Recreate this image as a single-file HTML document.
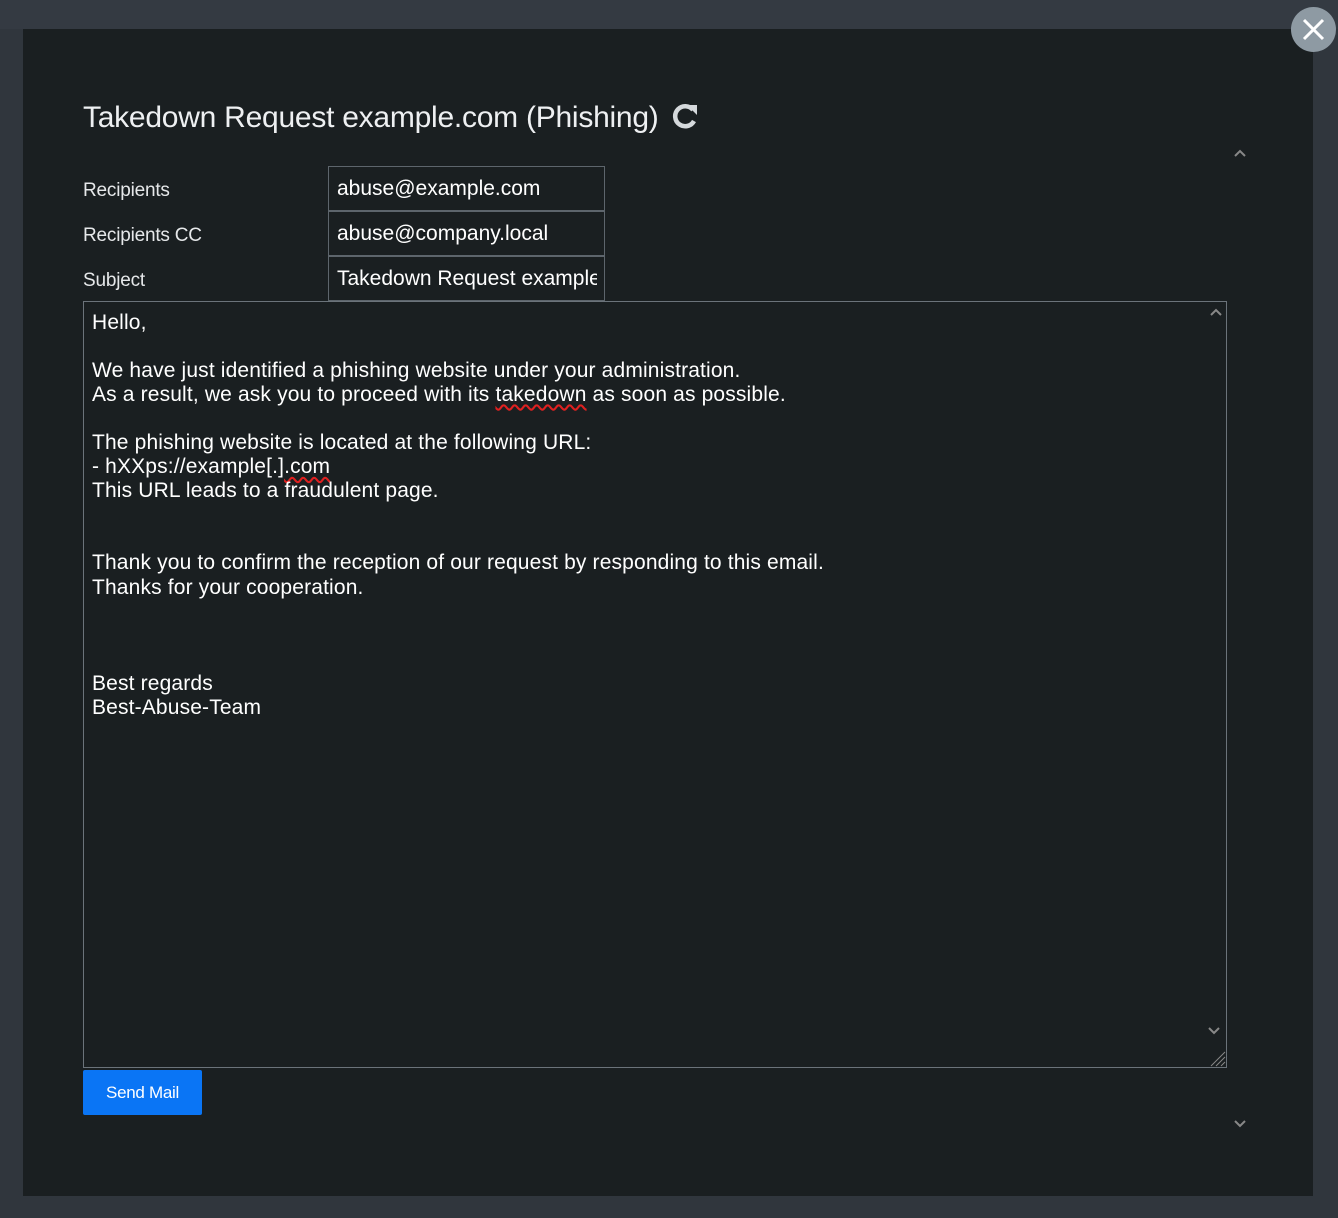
<!DOCTYPE html>
<html><head><meta charset="utf-8"><style>
*{box-sizing:border-box;margin:0;padding:0}
body{width:1338px;height:1218px;background:#30363d;font-family:"Liberation Sans",sans-serif;position:relative;overflow:hidden}
.bgtop{position:absolute;left:0;top:0;width:1338px;height:29px;background:#343a42}
.modal{position:absolute;left:23px;top:29px;width:1290px;height:1167px;background:#1a1f21}
.title{position:absolute;left:60px;top:72px;font-size:30px;color:#eef0f2;letter-spacing:-0.25px;white-space:nowrap}
.lbl{position:absolute;left:60px;font-size:19px;color:#e6e8ea;letter-spacing:-0.2px}
.inp{position:absolute;left:305px;width:277px;height:45px;border:1px solid #5d656c;color:#fff;font-size:21px;padding:10px 0 0 8px;overflow:hidden;white-space:nowrap}
.inp span{display:block;width:260px;overflow:hidden}
.ta{position:absolute;left:60px;top:272px;width:1144px;height:767px;border:1px solid #6b737a;color:#fff;font-size:21px;line-height:24.05px;padding:9px 8px;letter-spacing:0.15px}
.btn{position:absolute;left:60px;top:1041px;width:119px;height:45px;background:#0a75f5;border-radius:2px;color:#fff;font-size:17px;text-align:center;line-height:45px;letter-spacing:-0.3px}
.sq{text-decoration:underline wavy #e02020;text-underline-offset:3px}
.close{position:absolute;left:1291px;top:7px;width:45px;height:45px;border-radius:50%;background:#8e9aa3}
</style></head><body>
<div class="bgtop"></div>
<div class="modal">
<div class="title">Takedown Request example.com (Phishing) <svg width="28" height="28" viewBox="0 0 28 28" style="vertical-align:-3px;margin-left:4px"><path d="M22 8 A10 10 0 1 0 23 19" fill="none" stroke="#d5d9dc" stroke-width="4.5"/><path d="M16 3 L26 3 L26 13 Z" fill="#d5d9dc"/></svg></div>
<div class="lbl" style="top:151px">Recipients</div>
<div class="lbl" style="top:196px">Recipients CC</div>
<div class="lbl" style="top:241px">Subject</div>
<div class="inp" style="top:137px"><span>abuse@example.com</span></div>
<div class="inp" style="top:182px"><span>abuse@company.local</span></div>
<div class="inp" style="top:227px"><span>Takedown Request example.com (Phishing)</span></div>
<div class="ta">Hello,<br><br>We have just identified a phishing website under your administration.<br>As a result, we ask you to proceed with its <span class="sq">takedown</span> as soon as possible.<br><br>The phishing website is located at the following URL:<br>- hXXps://example[.]<span class="sq">.com</span><br>This URL leads to a fraudulent page.<br><br><br>Thank you to confirm the reception of our request by responding to this email.<br>Thanks for your cooperation.<br><br><br><br>Best regards<br>Best-Abuse-Team
<svg style="position:absolute;right:2px;top:4px" width="16" height="12"><path d="M3 9 L8 4 L13 9" stroke="#888" stroke-width="2" fill="none"/></svg>
<svg style="position:absolute;right:4px;bottom:30px" width="16" height="12"><path d="M3 3 L8 8 L13 3" stroke="#888" stroke-width="2" fill="none"/></svg>
<svg style="position:absolute;right:0;bottom:0" width="20" height="20"><path d="M19 5 L5 19 M19 10 L10 19 M19 15 L15 19" stroke="#888" stroke-width="1"/></svg>
</div>
<div class="btn">Send Mail</div>
<svg style="position:absolute;left:1209px;top:118px" width="16" height="12"><path d="M3 9 L8 4 L13 9" stroke="#888" stroke-width="2" fill="none"/></svg>
<svg style="position:absolute;left:1209px;top:1089px" width="16" height="12"><path d="M3 3 L8 8 L13 3" stroke="#888" stroke-width="2" fill="none"/></svg>
</div>
<div class="close"><svg width="45" height="45"><path d="M13 13 L32 32 M32 13 L13 32" stroke="#fff" stroke-width="3"/></svg></div>
</body></html>
